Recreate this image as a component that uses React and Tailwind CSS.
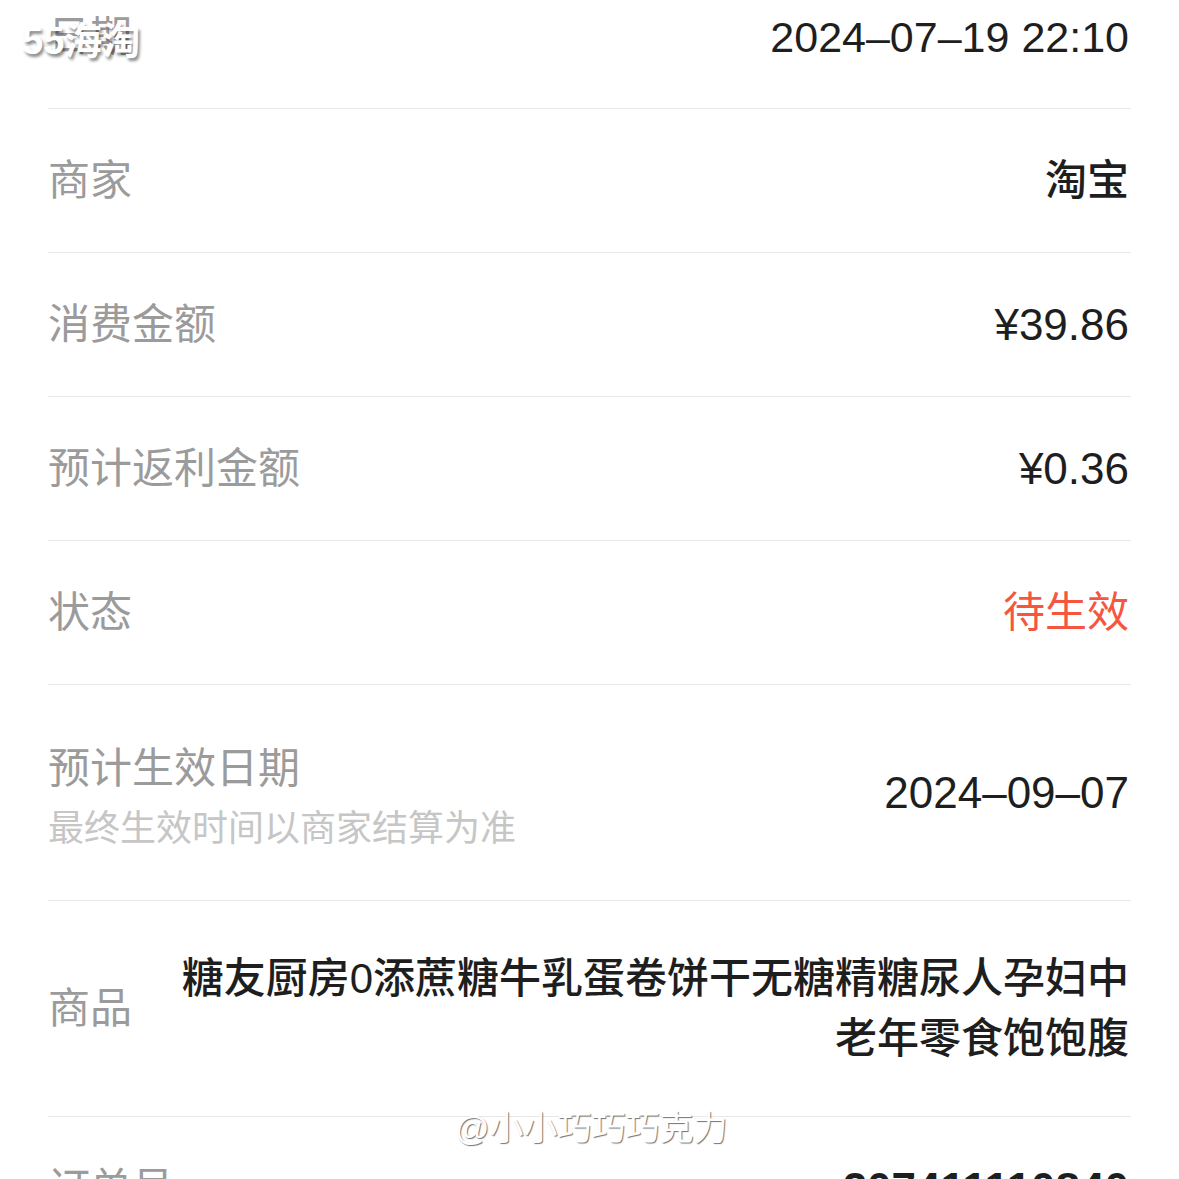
const rows = [
  { label: "日期", value: "2024–07–19 22:10", size: "text-[43px]" },
  { label: "商家", value: "淘宝", cjk: true },
  { label: "消费金额", value: "¥39.86", size: "text-[44px]" },
  { label: "预计返利金额", value: "¥0.36", size: "text-[44px]" },
  { label: "状态", value: "待生效", red: true },
];

function Row({ label, value, cjk, red, size }) {
  return (
    <div className="flex items-center justify-between h-[144px] border-b border-[#e8e8e8]">
      <span className="text-[42px] leading-[60px] text-[#9b9b9b]">{label}</span>
      <span
        className={`${size || "text-[42px]"} mr-[2px] leading-[60px] ${red ? "text-[#f5563f]" : "text-[#1e1e1e]"} ${cjk ? "font-medium" : ""}`}
      >
        {value}
      </span>
    </div>
  );
}

export default function App() {
  return (
    <div className="relative w-[1179px] h-[1179px] overflow-hidden bg-white font-[family-name:'Liberation_Sans','Noto_Sans_CJK_SC',sans-serif]">
      <div className="px-12 -mt-[35px]">
        {rows.map((r) => (
          <Row key={r.label} {...r} />
        ))}

        <div className="flex items-center justify-between h-[216px] border-b border-[#e8e8e8]">
          <div className="flex flex-col pt-[12px]">
            <span className="text-[42px] leading-[60px] text-[#9b9b9b]">预计生效日期</span>
            <span className="text-[36px] leading-[60px] text-[#c6c6c6]">最终生效时间以商家结算为准</span>
          </div>
          <span className="text-[44px] mr-[2px] leading-[60px] text-[#1e1e1e]">2024–09–07</span>
        </div>

        <div className="flex items-center justify-between h-[216px] border-b border-[#e8e8e8]">
          <span className="text-[42px] leading-[60px] text-[#9b9b9b] shrink-0">商品</span>
          <span className="w-[965px] mr-[2px] text-right text-[42px] leading-[60px] font-medium text-[#1e1e1e]">
            糖友厨房0添蔗糖牛乳蛋卷饼干无糖精糖尿人孕妇中老年零食饱饱腹
          </span>
        </div>

        <div className="flex items-center justify-between h-[144px]">
          <span className="text-[42px] leading-[60px] text-[#9b9b9b]">订单号</span>
          <span className="text-[44px] mr-[2px] leading-[60px] font-bold text-[#1e1e1e]">207411110840</span>
        </div>
      </div>

      <div className="absolute left-[22px] top-[18px] text-[38px] leading-[46px] font-bold text-white [text-shadow:2px_3px_3px_rgba(0,0,0,0.45)]">
        55海淘
      </div>
      <div className="absolute left-[455px] top-[1106px] text-[34px] leading-[44px] text-white [text-shadow:1px_1px_1px_rgba(0,0,0,0.55)]">
        @小小巧巧巧克力
      </div>
    </div>
  );
}
